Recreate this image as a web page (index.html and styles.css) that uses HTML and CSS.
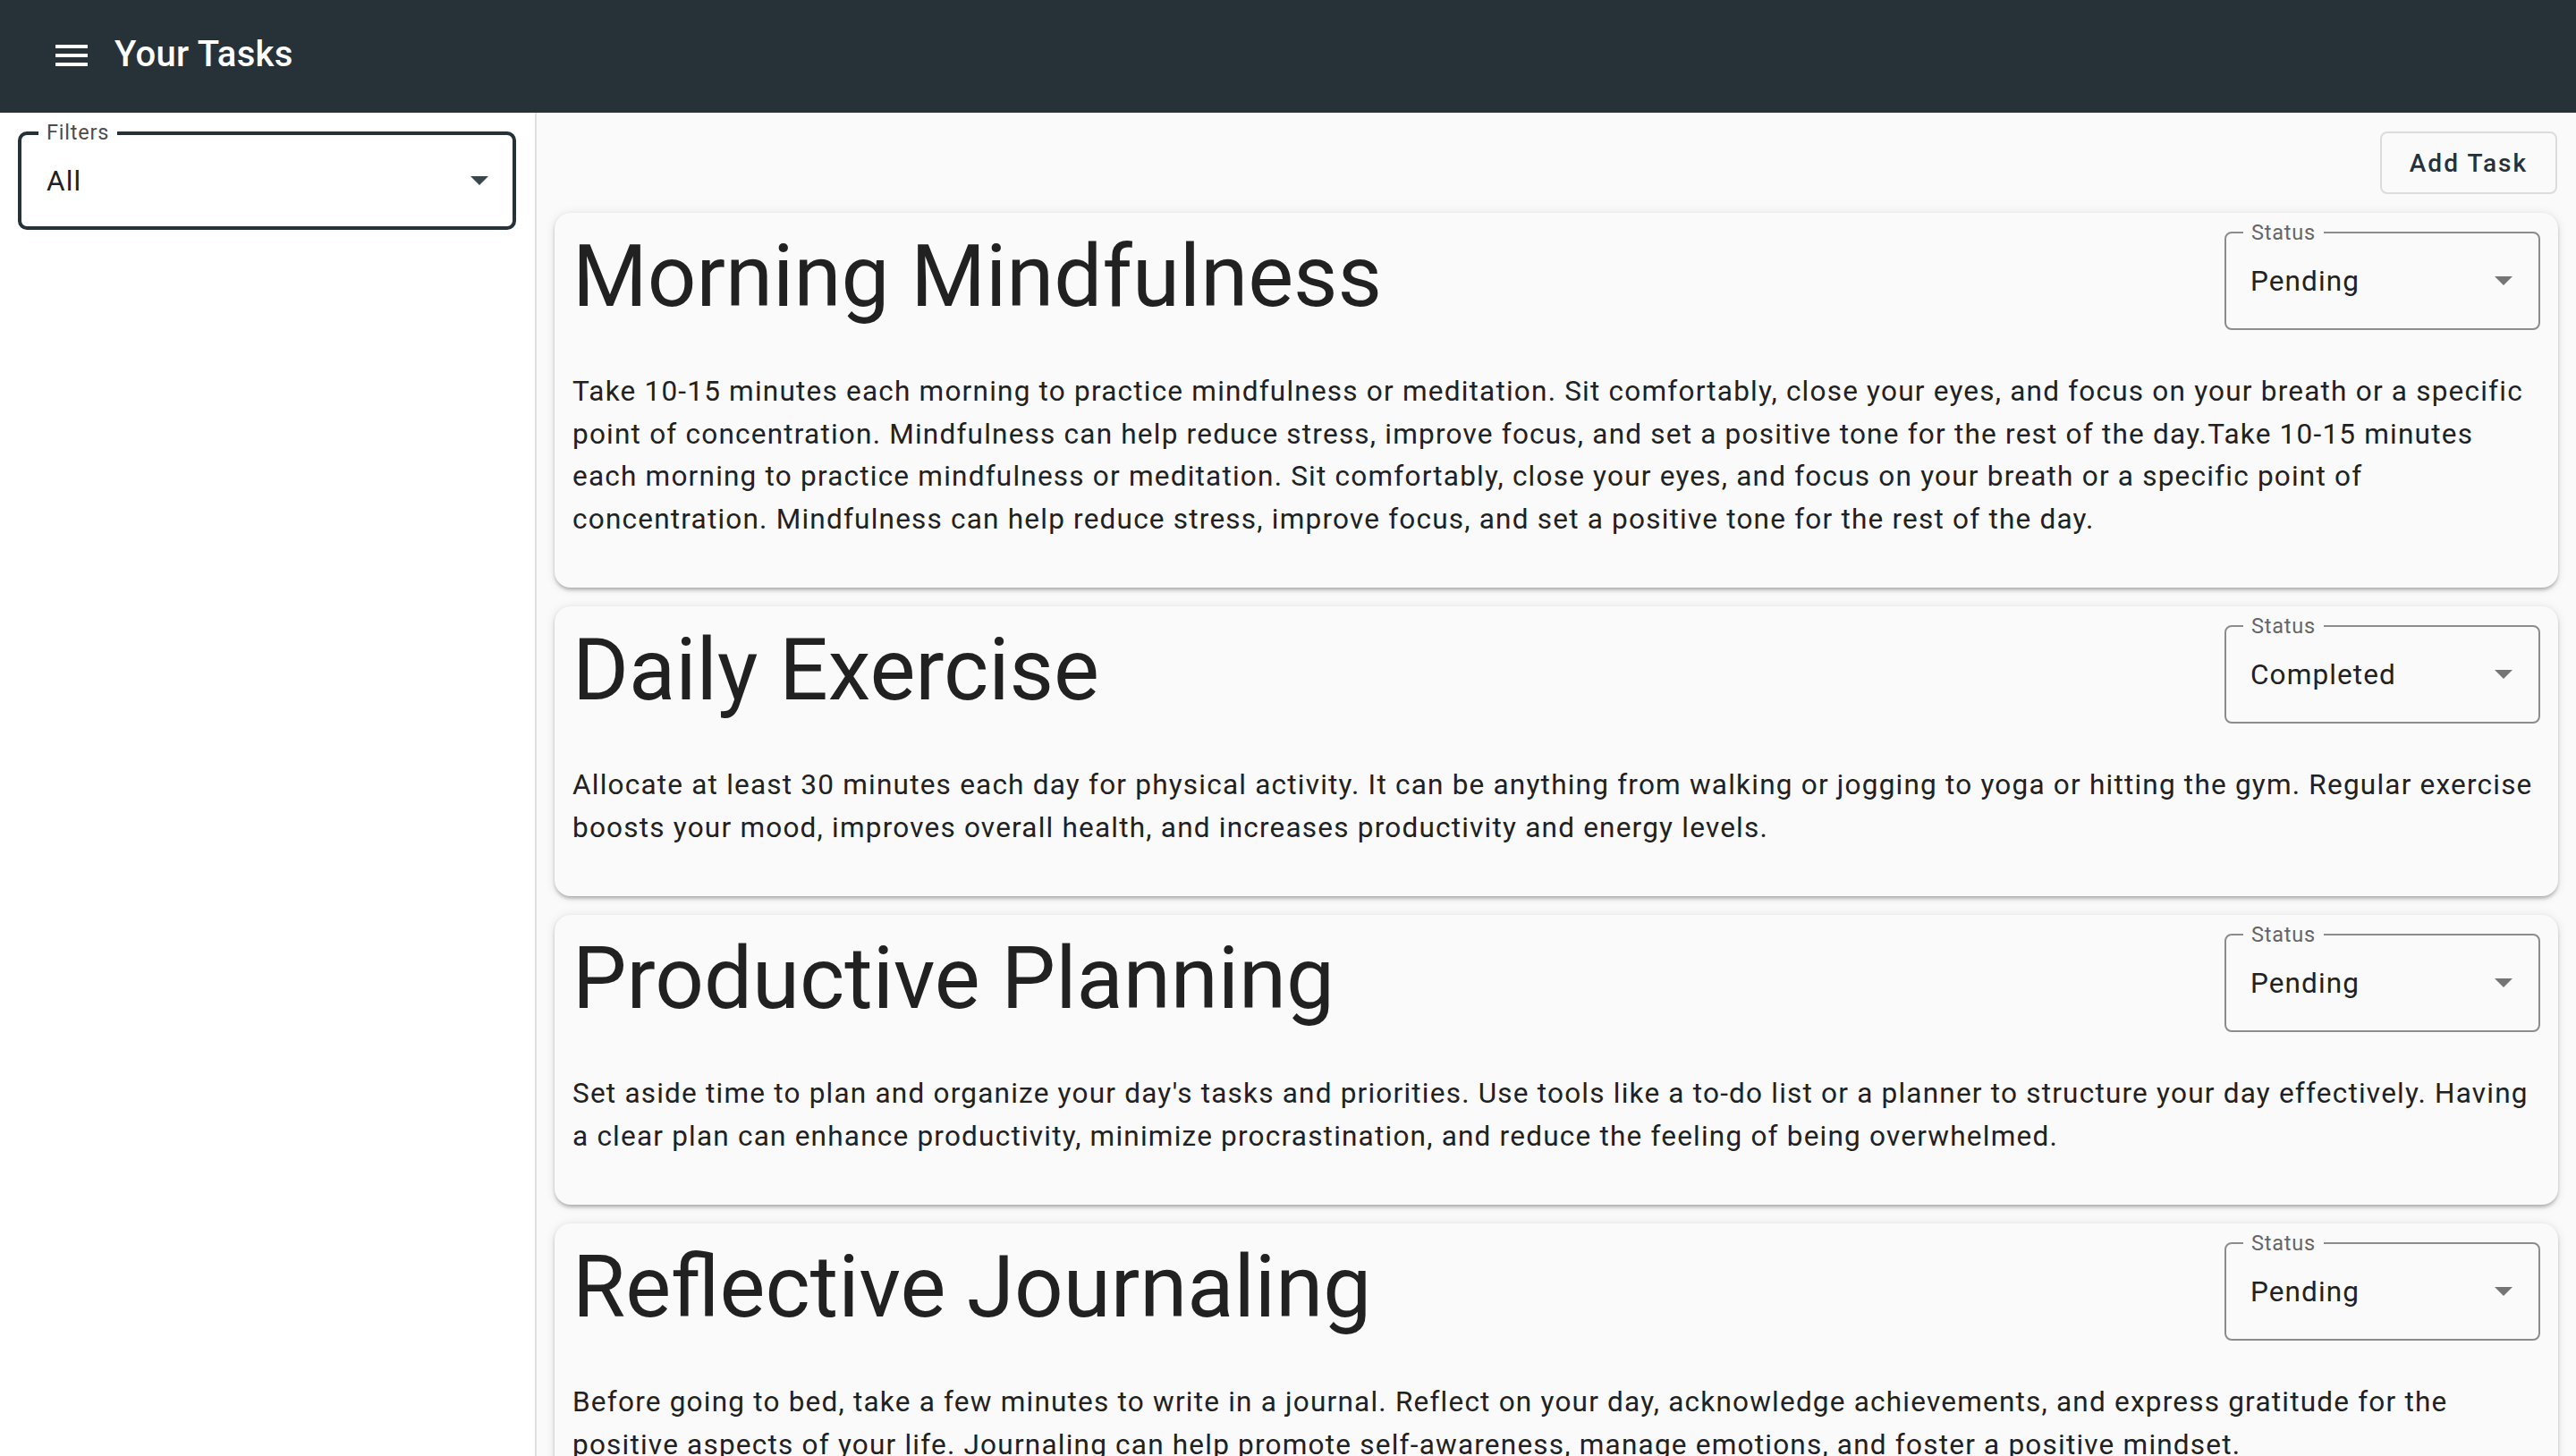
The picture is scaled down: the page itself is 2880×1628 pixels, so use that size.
FILE: index.html
```html
<!DOCTYPE html>
<html lang="en">
<head>
<meta charset="utf-8">
<title>Your Tasks</title>
<link rel="stylesheet" href="styles.css">
</head>
<body>
<header class="appbar">
  <svg class="menu-icon" viewBox="0 0 24 24" aria-hidden="true"><path d="M3 18h18v-2H3v2zm0-5h18v-2H3v2zm0-7v2h18V6H3z"/></svg>
  <h1 class="app-title">Your Tasks</h1>
</header>
<div class="layout">
  <aside class="sidebar">
    <div class="field field-filter">
      <span class="field-label">Filters</span>
      <span class="field-value">All</span>
      <svg class="caret" viewBox="0 0 20 10" aria-hidden="true"><path d="M0 0h20L10 10z"/></svg>
    </div>
  </aside>
  <main class="main">
    <div class="toolbar"><button class="add-btn" type="button">Add Task</button></div>

    <article class="card">
      <div class="card-head">
        <h2 class="card-title">Morning Mindfulness</h2>
        <div class="field field-status">
          <span class="field-label">Status</span>
          <span class="field-value">Pending</span>
          <svg class="caret" viewBox="0 0 20 10" aria-hidden="true"><path d="M0 0h20L10 10z"/></svg>
        </div>
      </div>
      <p class="card-text">Take 10-15 minutes each morning to practice mindfulness or meditation. Sit comfortably, close your eyes, and focus on your breath or a specific point of concentration. Mindfulness can help reduce stress, improve focus, and set a positive tone for the rest of the day.Take 10-15 minutes each morning to practice mindfulness or meditation. Sit comfortably, close your eyes, and focus on your breath or a specific point of concentration. Mindfulness can help reduce stress, improve focus, and set a positive tone for the rest of the day.</p>
    </article>

    <article class="card">
      <div class="card-head">
        <h2 class="card-title">Daily Exercise</h2>
        <div class="field field-status">
          <span class="field-label">Status</span>
          <span class="field-value">Completed</span>
          <svg class="caret" viewBox="0 0 20 10" aria-hidden="true"><path d="M0 0h20L10 10z"/></svg>
        </div>
      </div>
      <p class="card-text">Allocate at least 30 minutes each day for physical activity. It can be anything from walking or jogging to yoga or hitting the gym. Regular exercise boosts your mood, improves overall health, and increases productivity and energy levels.</p>
    </article>

    <article class="card">
      <div class="card-head">
        <h2 class="card-title">Productive Planning</h2>
        <div class="field field-status">
          <span class="field-label">Status</span>
          <span class="field-value">Pending</span>
          <svg class="caret" viewBox="0 0 20 10" aria-hidden="true"><path d="M0 0h20L10 10z"/></svg>
        </div>
      </div>
      <p class="card-text">Set aside time to plan and organize your day's tasks and priorities. Use tools like a to-do list or a planner to structure your day effectively. Having a clear plan can enhance productivity, minimize procrastination, and reduce the feeling of being overwhelmed.</p>
    </article>

    <article class="card">
      <div class="card-head">
        <h2 class="card-title">Reflective Journaling</h2>
        <div class="field field-status">
          <span class="field-label">Status</span>
          <span class="field-value">Pending</span>
          <svg class="caret" viewBox="0 0 20 10" aria-hidden="true"><path d="M0 0h20L10 10z"/></svg>
        </div>
      </div>
      <p class="card-text">Before going to bed, take a few minutes to write in a journal. Reflect on your day, acknowledge achievements, and express gratitude for the positive aspects of your life. Journaling can help promote self-awareness, manage emotions, and foster a positive mindset.</p>
    </article>
  </main>
</div>
</body>
</html>
```

FILE: styles.css
```css
* { box-sizing: border-box; }

html, body {
  margin: 0;
  height: 100%;
}

body {
  font-family: Roboto, "Liberation Sans", Arial, sans-serif;
  color: #212121;
  background: #fafafa;
  display: flex;
  flex-direction: column;
  overflow: hidden;
}

.appbar {
  flex: 0 0 126px;
  height: 126px;
  background: #263238;
  color: #fff;
  display: flex;
  align-items: center;
  padding-left: 56px;
}

.menu-icon {
  width: 48px;
  height: 48px;
  fill: #fff;
  flex-shrink: 0;
  margin-top: -2px;
}

.app-title {
  margin: -4px 0 0 24px;
  font-size: 40px;
  font-weight: 500;
  letter-spacing: 0.3px;
  line-height: 1;
}

.layout {
  flex: 1;
  min-height: 0;
  display: flex;
}

.sidebar {
  width: 600px;
  flex-shrink: 0;
  background: #fff;
  border-right: 2px solid #e0e0e0;
  padding: 21px 21px 0 20px;
}

.main {
  flex: 1;
  min-width: 0;
  background: #fafafa;
  padding: 21px 20px;
  display: flex;
  flex-direction: column;
  gap: 21px;
  overflow: hidden;
}

.toolbar {
  display: flex;
  justify-content: flex-end;
  flex-shrink: 0;
}

.add-btn {
  height: 70px;
  width: 198px;
  margin-right: 1px;
  border: 2px solid #dcdcdc;
  border-radius: 8px;
  background: transparent;
  font-family: Roboto, "Liberation Sans", Arial, sans-serif;
  font-size: 28px;
  font-weight: 500;
  letter-spacing: 2.1px;
  color: #263238;
  padding: 0;
}

.card {
  flex-shrink: 0;
  background: #fafafa;
  border-radius: 18px;
  padding: 20px 20px 53px;
  box-shadow: 0 4px 5px -2px rgba(0, 0, 0, 0.22), 0 2px 4px 0 rgba(0, 0, 0, 0.12), 0 1px 12px 0 rgba(0, 0, 0, 0.10);
}

.card-head {
  display: flex;
  justify-content: space-between;
  align-items: flex-start;
}

.card-title {
  margin: 0;
  font-size: 96px;
  font-weight: 400;
  line-height: 103px;
  color: #212121;
}

.card-text {
  margin: 45px 0 0;
  font-size: 31.5px;
  line-height: 47.5px;
  letter-spacing: 1.22px;
  color: #212121;
}

/* outlined select */
.field {
  position: relative;
  height: 110px;
  display: flex;
  align-items: center;
  justify-content: space-between;
  flex-shrink: 0;
}

.field-label {
  position: absolute;
  top: -14px;
  left: 19px;
  padding: 0 9px;
  font-size: 23.5px;
  line-height: 26px;
  letter-spacing: 0.8px;
}

.field-value {
  font-size: 31.5px;
  letter-spacing: 1.1px;
  color: #212121;
}

.caret {
  width: 20px;
  height: 10px;
}

.field-filter {
  width: 557px;
  border: 4px solid #263238;
  border-radius: 10px;
  padding: 0 27px 0 28px;
}

.field-filter .field-label {
  top: -16px;
  left: 19px;
  background: #fff;
  color: #4d4d4d;
}

.field-filter .caret { fill: #37474f; }

.field-status {
  width: 353px;
  margin-top: 1px;
  border: 2px solid #8c8c8c;
  border-radius: 8px;
  padding: 0 29px 0 27px;
}

.field-status .field-label {
  background: #fafafa;
  color: #666;
}

.field-status .caret { fill: #757575; }
```
